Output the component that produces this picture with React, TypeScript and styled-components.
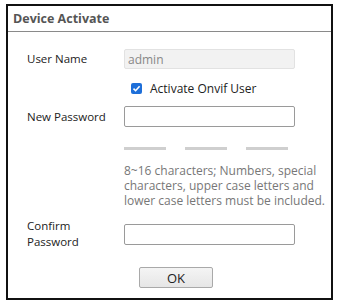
import React, { useState } from 'react'
import styled, { createGlobalStyle } from 'styled-components'

const GlobalStyle = createGlobalStyle`
  body {
    margin: 0;
    background: #ffffff;
    font-family: 'Open Sans', 'Noto Sans', sans-serif;
  }
`

const Dialog = styled.div`
  margin: 4px 0 0 6px;
  width: 323px;
  height: 292px;
  border: 2px solid #111;
  background: #fff;
  display: flex;
  flex-direction: column;
  overflow: hidden;
`

const Header = styled.div`
  flex: none;
  height: 25px;
  border-bottom: 1px solid #8a8a8a;
  padding-left: 5px;
  display: flex;
  align-items: center;
  font-size: 12.5px;
  font-weight: 700;
  color: #555;
`

const Body = styled.div`
  padding: 17px 0 0 19px;
  display: flex;
  flex-direction: column;
`

const Row = styled.div<{ $top?: number }>`
  display: grid;
  grid-template-columns: 97px 171px;
  align-items: center;
  margin-top: ${p => p.$top ?? 0}px;
`

const Label = styled.label`
  font-size: 11.5px;
  color: #222;
  line-height: 16px;
`

const TextInput = styled.input<{ $disabled?: boolean }>`
  box-sizing: border-box;
  width: 171px;
  height: ${p => (p.$disabled ? 20 : 21)}px;
  padding: 0 3px;
  border: 1px solid ${p => (p.$disabled ? '#e2e2e2' : '#9a9a9a')};
  border-radius: 2px;
  background: ${p => (p.$disabled ? '#f2f2f2' : '#fff')};
  color: #888;
  font-family: inherit;
  font-size: 12px;
  outline: none;
`

const CheckLine = styled.div`
  grid-column: 2;
  display: flex;
  align-items: center;
  gap: 8px;
  padding-left: 7px;
  font-size: 12px;
  color: #222;
`

const CheckBox = styled.span`
  width: 11px;
  height: 11px;
  border-radius: 2px;
  background: #1e6fd9;
  display: flex;
  align-items: center;
  justify-content: center;
`

const Bars = styled.div`
  grid-column: 2;
  display: flex;
  gap: 19px;
`

const Bar = styled.span`
  width: 42px;
  height: 3px;
  background: #cfcfcf;
`

const Hint = styled.p`
  grid-column: 2 / span 2;
  margin: 0;
  width: 206px;
  font-size: 12px;
  line-height: 15px;
  color: #777;
`

const Footer = styled.div`
  margin-top: 17px;
  padding-right: 6px;
  display: flex;
  justify-content: center;
`

const Button = styled.button`
  width: 74px;
  height: 21px;
  border: 1px solid #a9a9a9;
  border-radius: 2px;
  background: linear-gradient(#f4f4f4, #e6e6e6);
  font-family: inherit;
  font-size: 13px;
  color: #222;
  padding: 0;
`

const App = (): JSX.Element => {
  const [password, setPassword] = useState('')
  const [confirm, setConfirm] = useState('')

  return (
    <>
      <GlobalStyle />
      <Dialog>
        <Header>Device Activate</Header>
        <Body>
          <Row>
            <Label>User Name</Label>
            <TextInput $disabled value="admin" readOnly />
          </Row>
          <Row $top={11}>
            <CheckLine>
              <CheckBox>
                <svg width="9" height="9" viewBox="0 0 9 9">
                  <path d="M1.5 4.6 L3.6 6.7 L7.6 2.2" fill="none" stroke="#fff" strokeWidth="1.6" />
                </svg>
              </CheckBox>
              Activate Onvif User
            </CheckLine>
          </Row>
          <Row $top={9}>
            <Label>New Password</Label>
            <TextInput type="password" value={password} onChange={e => { setPassword(e.target.value) }} />
          </Row>
          <Row $top={20}>
            <Bars>
              <Bar />
              <Bar />
              <Bar />
            </Bars>
          </Row>
          <Row $top={13}>
            <Hint>
              8~16 characters; Numbers, special characters, upper case letters and lower case letters must be included.
            </Hint>
          </Row>
          <Row $top={10}>
            <Label>Confirm<br />Password</Label>
            <TextInput type="password" value={confirm} onChange={e => { setConfirm(e.target.value) }} />
          </Row>
          <Footer>
            <Button>OK</Button>
          </Footer>
        </Body>
      </Dialog>
    </>
  )
}

export default App
